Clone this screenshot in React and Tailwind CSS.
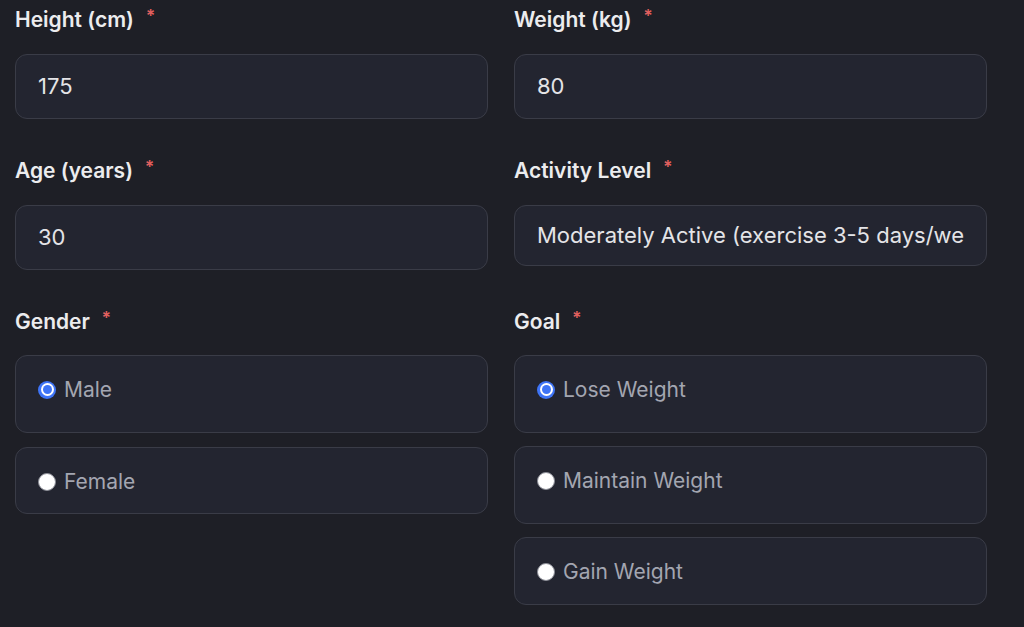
import React from 'react'

const font = { fontFamily: 'Inter, "Noto Sans", sans-serif' }

const Label = ({ children }) => (
  <div className="flex items-center h-[40px] text-[21px] font-semibold text-[#ececee]">
    <span>{children}</span>
    <span className="ml-[12px] text-[17px] text-[#e2605f] -mt-[7px]">*</span>
  </div>
)

const TextBox = ({ value, h = 'h-[65px]' }) => (
  <div className={`mt-[14px] ${h} flex items-center px-[22px] rounded-[12px] border border-[#3a3c47] bg-[#232530] text-[22px] text-[#e4e4e7]`}>
    <div className="overflow-hidden whitespace-nowrap">{value}</div>
  </div>
)

const Radio = ({ label, checked, h }) => (
  <div className={`${h} flex items-start pt-[18px] px-[22px] rounded-[12px] border border-[#3a3c47] bg-[#232530]`}>
    <div className="flex items-center">
      {checked ? (
        <span className="w-[18px] h-[18px] rounded-full bg-[#3e74f6] flex items-center justify-center">
          <span className="w-[13px] h-[13px] rounded-full bg-white flex items-center justify-center">
            <span className="w-[9px] h-[9px] rounded-full bg-[#3e74f6]" />
          </span>
        </span>
      ) : (
        <span className="w-[18px] h-[18px] rounded-full bg-white border border-[#8a8c95]" />
      )}
      <span className="ml-[8px] text-[21px] text-[#a3a6b1]">{label}</span>
    </div>
  </div>
)

const App = () => {
  return (
    <div className="w-[1024px] h-[627px] bg-[#1e1f26] overflow-hidden" style={font}>
      <div className="ml-[15px] grid grid-cols-[473px_473px] gap-x-[26px]">
        <div>
          <Label>Height (cm)</Label>
          <TextBox value="175" />
        </div>
        <div>
          <Label>Weight (kg)</Label>
          <TextBox value="80" />
        </div>
        <div className="mt-[32px]">
          <Label>Age (years)</Label>
          <TextBox value="30" />
        </div>
        <div className="mt-[32px]">
          <Label>Activity Level</Label>
          <TextBox value="Moderately Active (exercise 3-5 days/week)" h="h-[61px]" />
        </div>
        <div className="mt-[32px]">
          <Label>Gender</Label>
          <div className="mt-[13px] flex flex-col gap-[14px]">
            <Radio label="Male" checked h="h-[78px]" />
            <Radio label="Female" h="h-[67px]" />
          </div>
        </div>
        <div className="mt-[32px]">
          <Label>Goal</Label>
          <div className="mt-[13px] flex flex-col gap-[13px]">
            <Radio label="Lose Weight" checked h="h-[78px]" />
            <Radio label="Maintain Weight" h="h-[78px]" />
            <Radio label="Gain Weight" h="h-[68px]" />
          </div>
        </div>
      </div>
    </div>
  )
}

export default App
